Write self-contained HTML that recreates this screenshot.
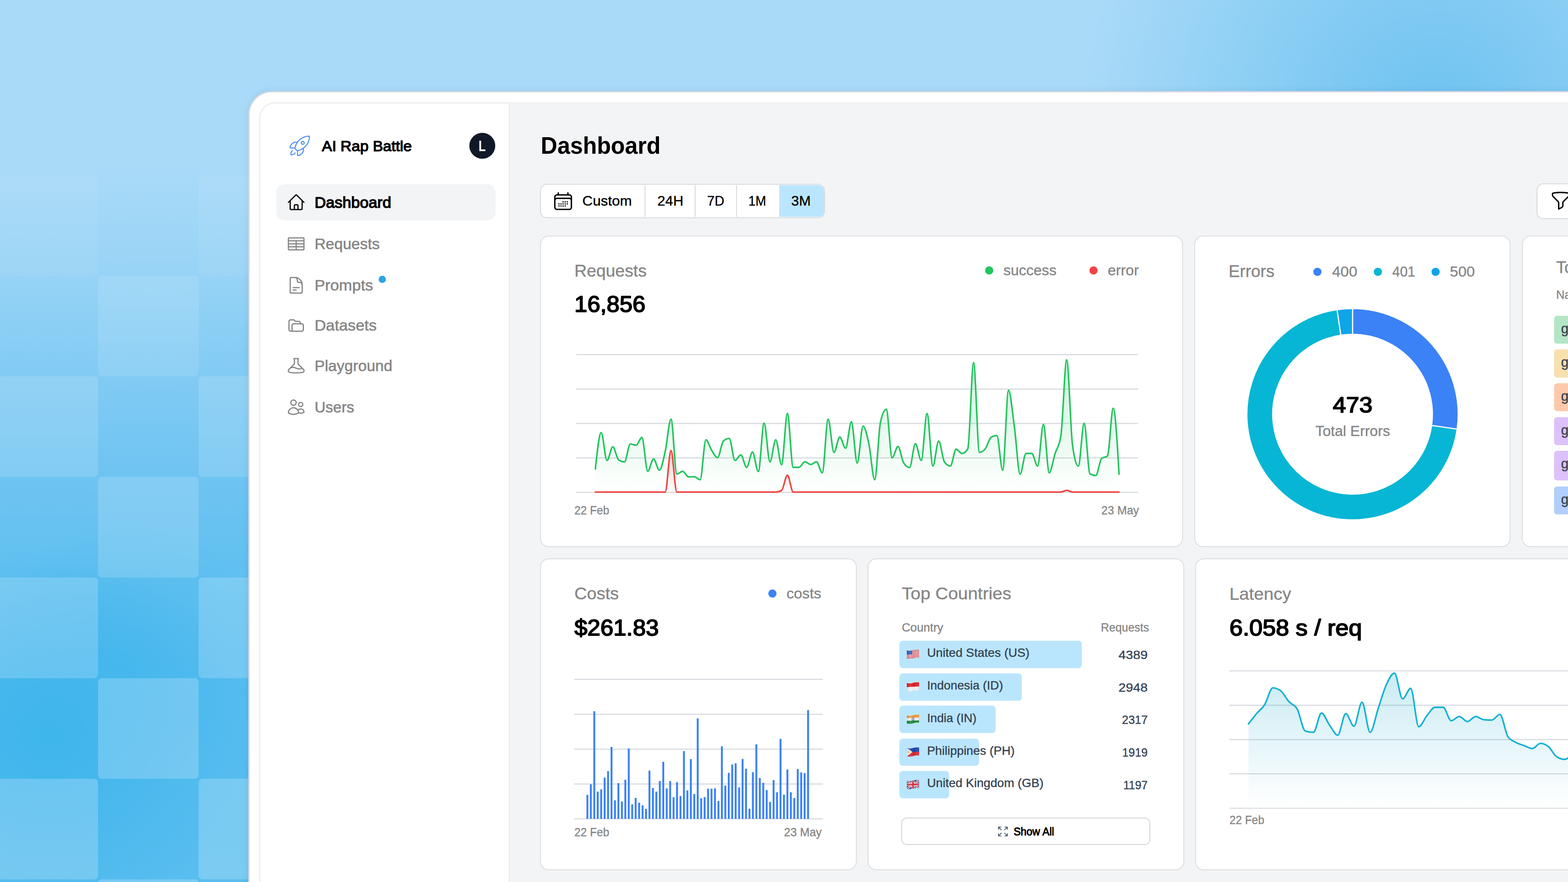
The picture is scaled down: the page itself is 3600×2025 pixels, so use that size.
<!DOCTYPE html>
<html lang="en"><head><meta charset="utf-8"><title>Dashboard</title>
<style>
html,body{margin:0;padding:0}
body{width:3600px;height:2025px;overflow:hidden;position:relative;font-family:"Liberation Sans", sans-serif;background:#a9d9f7}
#root{position:absolute;left:0;top:0;width:3600px;height:2025px;overflow:hidden}
#root>div{position:absolute;box-sizing:border-box}
svg{position:absolute;left:0;top:0}
svg text{font-family:"Liberation Sans", sans-serif;white-space:pre}
.ic{fill:none;stroke-linecap:round;stroke-linejoin:round}
</style></head>
<body><div id="root">
<div style="left:0.0px;top:0.0px;width:3600.0px;height:2025.0px;background:radial-gradient(ellipse 450px 430px at 110px 1690px, rgba(58,180,236,.85) 0%, rgba(58,180,236,.45) 50%, rgba(58,180,236,0) 100%),radial-gradient(ellipse 330px 300px at 290px 1500px, rgba(64,180,236,.38) 0%, rgba(64,180,236,0) 100%),linear-gradient(180deg,#a9daf8 0%,#a9daf8 19%,#99d4f6 30%,#84ccf4 41%,#70c4f2 53%,#60c0f0 65%,#55bcef 78%,#58bdef 100%);"></div>
<div style="left:2400.0px;top:0.0px;width:1200.0px;height:230.0px;background:radial-gradient(ellipse 810px 900px at 895px 300px, rgba(108,194,240,1) 0%, rgba(108,194,240,.5) 50%, rgba(108,194,240,0) 100%);"></div>
<div style="left:-6.3px;top:401.5px;width:231.0px;height:231.0px;background:rgba(255,255,255,0.06);border-radius:9px;"></div>
<div style="left:455.7px;top:401.5px;width:231.0px;height:231.0px;background:rgba(255,255,255,0.06);border-radius:9px;"></div>
<div style="left:224.7px;top:632.5px;width:231.0px;height:231.0px;background:rgba(255,255,255,0.11);border-radius:9px;"></div>
<div style="left:-6.3px;top:863.5px;width:231.0px;height:231.0px;background:rgba(255,255,255,0.14);border-radius:9px;"></div>
<div style="left:455.7px;top:863.5px;width:231.0px;height:231.0px;background:rgba(255,255,255,0.14);border-radius:9px;"></div>
<div style="left:224.7px;top:1094.5px;width:231.0px;height:231.0px;background:rgba(255,255,255,0.16);border-radius:9px;"></div>
<div style="left:-6.3px;top:1325.5px;width:231.0px;height:231.0px;background:rgba(255,255,255,0.19);border-radius:9px;"></div>
<div style="left:455.7px;top:1325.5px;width:231.0px;height:231.0px;background:rgba(255,255,255,0.19);border-radius:9px;"></div>
<div style="left:224.7px;top:1556.5px;width:231.0px;height:231.0px;background:rgba(255,255,255,0.21);border-radius:9px;"></div>
<div style="left:-6.3px;top:1787.5px;width:231.0px;height:231.0px;background:rgba(255,255,255,0.21);border-radius:9px;"></div>
<div style="left:455.7px;top:1787.5px;width:231.0px;height:231.0px;background:rgba(255,255,255,0.21);border-radius:9px;"></div>
<div style="left:224.7px;top:2018.5px;width:231.0px;height:231.0px;background:rgba(255,255,255,0.21);border-radius:9px;"></div>
<div style="left:570.0px;top:209.0px;width:3200.0px;height:2000.0px;background:#fff;border:3px solid #d3d7e1;border-radius:54px;box-shadow:0 0 16px rgba(30,70,130,.10);"></div>
<div style="left:595.0px;top:235.0px;width:3200.0px;height:2000.0px;background:#f3f4f6;border:2.7px solid #eeeeef;border-radius:36px;overflow:hidden;"></div>
<div style="left:597.5px;top:237.5px;width:572.0px;height:2000.0px;background:#fff;border-right:2.5px solid #e6e7ec;border-top-left-radius:33px;"></div>
<div style="left:634.0px;top:423.3px;width:503.5px;height:82.3px;background:#f3f4f6;border-radius:19px;"></div>
<div style="left:1240.0px;top:422.3px;width:654.0px;height:78.7px;background:#fff;border:2.5px solid #d8d9db;border-radius:16px;overflow:hidden;"></div>
<div style="left:1788.5px;top:424.8px;width:103.0px;height:73.7px;background:#bae6fd;border-radius:0 13px 13px 0;"></div>
<div style="left:1480.0px;top:424.8px;width:2.0px;height:73.7px;background:#d8d9db;"></div>
<div style="left:1595.0px;top:424.8px;width:2.0px;height:73.7px;background:#d8d9db;"></div>
<div style="left:1690.0px;top:424.8px;width:2.0px;height:73.7px;background:#d8d9db;"></div>
<div style="left:3528.4px;top:421.0px;width:140.0px;height:81.5px;background:#fff;border:2.5px solid #d8d9db;border-radius:15px;"></div>
<div style="left:1240.0px;top:540.5px;width:1476.0px;height:715.5px;background:#fff;border:2.5px solid #dcdde0;border-radius:20px;"></div>
<div style="left:2742.0px;top:540.5px;width:726.0px;height:715.5px;background:#fff;border:2.5px solid #dcdde0;border-radius:20px;"></div>
<div style="left:3494.0px;top:540.5px;width:726.0px;height:715.5px;background:#fff;border:2.5px solid #dcdde0;border-radius:20px;"></div>
<div style="left:1240.0px;top:1282.3px;width:726.5px;height:715.5px;background:#fff;border:2.5px solid #dcdde0;border-radius:20px;"></div>
<div style="left:1992.0px;top:1282.3px;width:726.5px;height:715.5px;background:#fff;border:2.5px solid #dcdde0;border-radius:20px;"></div>
<div style="left:2744.0px;top:1282.3px;width:1476.0px;height:715.5px;background:#fff;border:2.5px solid #dcdde0;border-radius:20px;"></div>
<div style="left:3568.0px;top:724.5px;width:300.0px;height:64.5px;background:#b4e6c6;border-radius:7px;"></div>
<div style="left:3568.0px;top:802.0px;width:300.0px;height:64.5px;background:#f8e0ae;border-radius:7px;"></div>
<div style="left:3568.0px;top:879.5px;width:300.0px;height:64.5px;background:#fdc9aa;border-radius:7px;"></div>
<div style="left:3568.0px;top:957.5px;width:300.0px;height:64.5px;background:#dcc1fb;border-radius:7px;"></div>
<div style="left:3568.0px;top:1035.0px;width:300.0px;height:68.0px;background:#dcc1fb;border-radius:7px;"></div>
<div style="left:3568.0px;top:1116.5px;width:300.0px;height:64.5px;background:#b1cefd;border-radius:7px;"></div>
<div style="left:2065.2px;top:1471.2px;width:418.7px;height:62.6px;background:#bae6fd;border-radius:8px;"></div>
<div style="left:2065.2px;top:1546.0px;width:281.2px;height:62.6px;background:#bae6fd;border-radius:8px;"></div>
<div style="left:2065.2px;top:1620.4px;width:221.0px;height:62.6px;background:#bae6fd;border-radius:8px;"></div>
<div style="left:2065.2px;top:1695.6px;width:183.1px;height:62.6px;background:#bae6fd;border-radius:8px;"></div>
<div style="left:2065.2px;top:1770.3px;width:114.2px;height:62.6px;background:#bae6fd;border-radius:8px;"></div>
<div style="left:2069.0px;top:1876.7px;width:572.3px;height:63.7px;background:#fff;border:2.5px solid #d4d5d9;border-radius:13px;"></div>
<svg width="3600" height="2025" viewBox="0 0 3600 2025">
<defs>
<linearGradient id="gG" x1="0" y1="0" x2="0" y2="1"><stop offset="0" stop-color="#22c55e" stop-opacity=".22"/><stop offset="1" stop-color="#22c55e" stop-opacity="0"/></linearGradient>
<linearGradient id="gR" x1="0" y1="0" x2="0" y2="1"><stop offset="0" stop-color="#ef4444" stop-opacity=".22"/><stop offset="1" stop-color="#ef4444" stop-opacity="0"/></linearGradient>
<linearGradient id="gC" x1="0" y1="0" x2="0" y2="1"><stop offset="0" stop-color="#0ea5c9" stop-opacity=".22"/><stop offset="1" stop-color="#0ea5c9" stop-opacity="0"/></linearGradient>
</defs>
<g class="ic" transform="translate(661.0,307.6) scale(2.2708)" stroke="#4a8af4" stroke-width="1.0"><path d="M15.59 14.37a6 6 0 0 1-5.84 7.38v-4.8m5.84-2.58a14.98 14.98 0 0 0 6.16-12.12A14.98 14.98 0 0 0 9.631 8.41m5.96 5.96a14.926 14.926 0 0 1-5.841 2.58m-.119-8.54a6 6 0 0 0-7.381 5.84h4.8m2.581-5.84a14.927 14.927 0 0 0-2.58 5.84m2.699 2.7c-.103.021-.207.041-.311.06a15.09 15.09 0 0 1-2.448-2.448 14.9 14.9 0 0 1 .06-.312m-2.24 2.39a4.493 4.493 0 0 0-1.757 4.306 4.493 4.493 0 0 0 4.306-1.758M16.5 9a1.5 1.5 0 1 1-3 0 1.5 1.5 0 0 1 3 0Z"/></g>
<text x="739.0" y="346.6" font-size="33.99" font-weight="400" fill="#000" stroke="#000" stroke-width="1.5" stroke-linejoin="round" text-anchor="start" textLength="206.6" lengthAdjust="spacingAndGlyphs">AI Rap Battle</text>
<circle cx="1107.3" cy="334.7" r="29.8" fill="#111827"/>
<text x="1107.0" y="347.0" font-size="34.51" font-weight="700" fill="#fff" text-anchor="middle" textLength="16.4" lengthAdjust="spacingAndGlyphs">L</text>
<g class="ic" transform="translate(658.0,442.6) scale(1.8333)" stroke="#000" stroke-width="1.5"><path d="m2.25 12 8.954-8.955c.44-.439 1.152-.439 1.591 0L21.75 12M4.5 9.75v10.125c0 .621.504 1.125 1.125 1.125H9.75v-4.875c0-.621.504-1.125 1.125-1.125h2.25c.621 0 1.125.504 1.125 1.125V21h4.125c.621 0 1.125-.504 1.125-1.125V9.75M8.25 21h8.25"/></g>
<text x="722.2" y="476.6" font-size="34.20" font-weight="401" fill="#000" stroke="#000" stroke-width="1.5" stroke-linejoin="round" text-anchor="start" textLength="176.2" lengthAdjust="spacingAndGlyphs">Dashboard</text>
<g class="ic" transform="translate(658.0,537.8) scale(1.8333)" stroke="#868686" stroke-width="1.5"><path d="M3.375 4.5h17.25c.621 0 1.125.504 1.125 1.125v12.75c0 .621-.504 1.125-1.125 1.125H3.375a1.125 1.125 0 0 1-1.125-1.125V5.625c0-.621.504-1.125 1.125-1.125Z"/><path d="M2.25 8.25h19.5M2.25 12h19.5M2.25 15.75h19.5M12 8.25v11.25"/></g>
<text x="722.2" y="571.8" font-size="34.20" font-weight="400" fill="#868686" stroke="#868686" stroke-width="0.7" stroke-linejoin="round" text-anchor="start" textLength="149.6" lengthAdjust="spacingAndGlyphs">Requests</text>
<g class="ic" transform="translate(658.0,633.0) scale(1.8333)" stroke="#868686" stroke-width="1.5"><path d="M19.5 14.25v-2.625a3.375 3.375 0 0 0-3.375-3.375h-1.5A1.125 1.125 0 0 1 13.5 7.125v-1.5a3.375 3.375 0 0 0-3.375-3.375H8.25m0 12.75h7.5m-7.5 3H12M10.5 2.25H5.625c-.621 0-1.125.504-1.125 1.125v17.25c0 .621.504 1.125 1.125 1.125h12.75c.621 0 1.125-.504 1.125-1.125V11.25a9 9 0 0 0-9-9Z"/></g>
<text x="722.2" y="667.0" font-size="34.20" font-weight="400" fill="#868686" stroke="#868686" stroke-width="0.7" stroke-linejoin="round" text-anchor="start" textLength="134.4" lengthAdjust="spacingAndGlyphs">Prompts</text>
<g class="ic" transform="translate(658.0,725.3) scale(1.8333)" stroke="#868686" stroke-width="1.5"><path d="M6.85 19.15H4.9A1.9 1.9 0 0 1 3 17.25V6.9A1.9 1.9 0 0 1 4.9 5h3.5c.5 0 .98.2 1.34.56l.8.8c.36.35.84.55 1.34.55h3.5a1.9 1.9 0 0 1 1.9 1.9v1.1"/><path d="M8.75 9.9h10.35a1.9 1.9 0 0 1 1.9 1.9v5.45a1.9 1.9 0 0 1-1.9 1.9H6.85V11.8a1.9 1.9 0 0 1 1.9-1.9Z"/></g>
<text x="722.2" y="759.3" font-size="34.20" font-weight="400" fill="#868686" stroke="#868686" stroke-width="0.7" stroke-linejoin="round" text-anchor="start" textLength="142.7" lengthAdjust="spacingAndGlyphs">Datasets</text>
<g class="ic" transform="translate(658.0,817.7) scale(1.8333)" stroke="#868686" stroke-width="1.5"><path d="M9.75 3.104v5.714a2.25 2.25 0 0 1-.659 1.591L5 14.5M9.75 3.104c-.251.023-.501.05-.75.082m.75-.082a24.301 24.301 0 0 1 4.5 0m0 0v5.714c0 .597.237 1.17.659 1.591L19.8 15.3M14.25 3.104c.251.023.501.05.75.082M19.8 15.3l-1.57.393A9.065 9.065 0 0 1 12 15a9.065 9.065 0 0 0-6.23-.693L5 14.5m14.8.8 1.402 1.402c1.232 1.232.65 3.318-1.067 3.611A48.309 48.309 0 0 1 12 21c-2.773 0-5.491-.235-8.135-.687-1.718-.293-2.3-2.379-1.067-3.61L5 14.5"/></g>
<text x="722.2" y="851.7" font-size="34.20" font-weight="400" fill="#868686" stroke="#868686" stroke-width="0.7" stroke-linejoin="round" text-anchor="start" textLength="178.6" lengthAdjust="spacingAndGlyphs">Playground</text>
<g class="ic" transform="translate(658.0,912.8) scale(1.8333)" stroke="#868686" stroke-width="1.5"><path d="M15 19.128a9.38 9.38 0 0 0 2.625.372 9.337 9.337 0 0 0 4.121-.952 4.125 4.125 0 0 0-7.533-2.493M15 19.128v-.003c0-1.113-.285-2.16-.786-3.07M15 19.128v.106A12.318 12.318 0 0 1 8.624 21c-2.331 0-4.512-.645-6.374-1.766l-.001-.109a6.375 6.375 0 0 1 11.964-3.07M12 6.375a3.375 3.375 0 1 1-6.75 0 3.375 3.375 0 0 1 6.75 0Zm8.25 2.25a2.625 2.625 0 1 1-5.25 0 2.625 2.625 0 0 1 5.25 0Z"/></g>
<text x="722.2" y="946.8" font-size="34.20" font-weight="400" fill="#868686" stroke="#868686" stroke-width="0.7" stroke-linejoin="round" text-anchor="start" textLength="91.0" lengthAdjust="spacingAndGlyphs">Users</text>
<circle cx="877.7" cy="641.4" r="8.3" fill="#2ea3e6"/>
<text x="1241.6" y="352.6" font-size="54.59" font-weight="700" fill="#000" text-anchor="start" textLength="275.1" lengthAdjust="spacingAndGlyphs">Dashboard</text>
<g class="ic" transform="translate(1267.5,436.4) scale(2.1125)" stroke="#000" stroke-width="1.5"><path d="M6.75 3v2.25M17.25 3v2.25M3 18.75V7.5a2.25 2.25 0 0 1 2.25-2.25h13.5A2.25 2.25 0 0 1 21 7.5v11.25m-18 0A2.25 2.25 0 0 0 5.25 21h13.5A2.25 2.25 0 0 0 21 18.75m-18 0v-7.5A2.25 2.25 0 0 1 5.25 9h13.5A2.25 2.25 0 0 1 21 11.25v7.5"/><path d="M12 12.75h.008v.008H12v-.008ZM12 15h.008v.008H12V15Zm0 2.25h.008v.008H12v-.008ZM9.75 15h.008v.008H9.75V15Zm0 2.25h.008v.008H9.75v-.008ZM7.5 15h.008v.008H7.5V15Zm0 2.25h.008v.008H7.5v-.008Zm6.75-4.5h.008v.008h-.008v-.008Zm0 2.25h.008v.008h-.008V15Zm0 2.25h.008v.008h-.008v-.008Zm2.25-4.5h.008v.008H16.5v-.008Zm0 2.25h.008v.008H16.5V15Z"/></g>
<text x="1337.1" y="472.3" font-size="31.93" font-weight="400" fill="#000" stroke="#000" stroke-width="0.45" stroke-linejoin="round" text-anchor="start" textLength="113.6" lengthAdjust="spacingAndGlyphs">Custom</text>
<text x="1509.2" y="472.3" font-size="31.93" font-weight="400" fill="#000" stroke="#000" stroke-width="0.45" stroke-linejoin="round" text-anchor="start" textLength="59.9" lengthAdjust="spacingAndGlyphs">24H</text>
<text x="1623.6" y="472.3" font-size="31.93" font-weight="400" fill="#000" stroke="#000" stroke-width="0.45" stroke-linejoin="round" text-anchor="start" textLength="39.3" lengthAdjust="spacingAndGlyphs">7D</text>
<text x="1718.2" y="472.3" font-size="31.93" font-weight="400" fill="#000" stroke="#000" stroke-width="0.45" stroke-linejoin="round" text-anchor="start" textLength="40.8" lengthAdjust="spacingAndGlyphs">1M</text>
<text x="1816.6" y="472.3" font-size="31.93" font-weight="400" fill="#000" stroke="#000" stroke-width="0.45" stroke-linejoin="round" text-anchor="start" textLength="44.8" lengthAdjust="spacingAndGlyphs">3M</text>
<g class="ic" transform="translate(3558.0,435.5) scale(2.1125)" stroke="#000" stroke-width="1.5"><path d="M12 3c2.755 0 5.455.232 8.083.678.533.09.917.556.917 1.096v1.044a2.25 2.25 0 0 1-.659 1.591l-5.432 5.432a2.25 2.25 0 0 0-.659 1.591v2.927a2.25 2.25 0 0 1-1.244 2.013L9.75 21v-6.568a2.25 2.25 0 0 0-.659-1.591L3.659 7.409A2.25 2.25 0 0 1 3 5.818V4.774c0-.54.384-1.006.917-1.096A48.32 48.32 0 0 1 12 3Z"/></g>
<text x="1318.8" y="634.9" font-size="38.11" font-weight="400" fill="#868686" stroke="#868686" stroke-width="0.45" stroke-linejoin="round" text-anchor="start" textLength="165.8" lengthAdjust="spacingAndGlyphs">Requests</text>
<text x="1318.8" y="716.3" font-size="51.50" font-weight="400" fill="#000" stroke="#000" stroke-width="2.1" stroke-linejoin="round" text-anchor="start" textLength="163.0" lengthAdjust="spacingAndGlyphs">16,856</text>
<circle cx="2271.1" cy="620.9" r="9.4" fill="#22c55e"/>
<text x="2303.7" y="632.3" font-size="32.96" font-weight="400" fill="#868686" stroke="#868686" stroke-width="0.45" stroke-linejoin="round" text-anchor="start" textLength="121.9" lengthAdjust="spacingAndGlyphs">success</text>
<circle cx="2510.6" cy="620.9" r="9.4" fill="#ef4444"/>
<text x="2543.2" y="632.3" font-size="32.96" font-weight="400" fill="#868686" stroke="#868686" stroke-width="0.45" stroke-linejoin="round" text-anchor="start" textLength="71.5" lengthAdjust="spacingAndGlyphs">error</text>
<line x1="1323.0" y1="814.2" x2="2613.0" y2="814.2" stroke="#d6d9df" stroke-width="2.4"/>
<line x1="1323.0" y1="893.2" x2="2613.0" y2="893.2" stroke="#d6d9df" stroke-width="2.4"/>
<line x1="1323.0" y1="972.2" x2="2613.0" y2="972.2" stroke="#d6d9df" stroke-width="2.4"/>
<line x1="1323.0" y1="1051.2" x2="2613.0" y2="1051.2" stroke="#d6d9df" stroke-width="2.4"/>
<line x1="1323.0" y1="1130.2" x2="2613.0" y2="1130.2" stroke="#d6d9df" stroke-width="2.4"/>
<path d="M1366.9,1076.6C1371.4,1034.9 1375.8,993.2 1380.3,993.2C1384.7,993.2 1389.2,1057.2 1393.6,1057.2C1398.1,1057.2 1402.5,1025.8 1407.0,1025.8C1411.4,1025.8 1415.9,1053.1 1420.3,1056.0C1424.8,1058.9 1429.2,1060.4 1433.7,1060.4C1438.2,1060.4 1442.6,1019.3 1447.1,1019.3C1451.5,1019.3 1456.0,1022.2 1460.4,1022.2C1464.9,1022.2 1469.3,1004.1 1473.8,1004.1C1478.2,1004.1 1482.7,1082.1 1487.1,1082.1C1491.6,1082.1 1496.0,1053.6 1500.5,1053.6C1505.0,1053.6 1509.4,1079.7 1513.9,1079.7C1518.3,1079.7 1522.8,1056.3 1527.2,1036.7C1531.7,1017.1 1536.1,962.3 1540.6,962.3C1545.0,962.3 1549.5,1088.6 1553.9,1088.6C1558.4,1088.6 1562.8,1082.1 1567.3,1082.1C1571.8,1082.1 1576.2,1094.7 1580.7,1094.7C1585.1,1094.7 1589.6,1094.7 1594.0,1094.7C1598.5,1094.7 1602.9,1101.4 1607.4,1101.4C1611.8,1101.4 1616.3,1009.7 1620.7,1009.7C1625.2,1009.7 1629.6,1027.5 1634.1,1034.3C1638.6,1041.1 1643.0,1050.7 1647.5,1050.7C1651.9,1050.7 1656.4,1016.6 1660.8,1012.6C1665.3,1008.5 1669.7,1006.5 1674.2,1006.5C1678.6,1006.5 1683.1,1057.2 1687.5,1057.2C1692.0,1057.2 1696.4,1044.4 1700.9,1044.4C1705.4,1044.4 1709.8,1072.9 1714.3,1072.9C1718.7,1072.9 1723.2,1037.9 1727.6,1037.9C1732.1,1037.9 1736.5,1082.6 1741.0,1082.6C1745.4,1082.6 1749.9,971.5 1754.3,971.5C1758.8,971.5 1763.2,1060.4 1767.7,1060.4C1772.2,1060.4 1776.6,1009.7 1781.1,1009.7C1785.5,1009.7 1790.0,1066.9 1794.4,1066.9C1798.9,1066.9 1803.3,949.3 1807.8,949.3C1812.2,949.3 1816.7,1072.9 1821.1,1072.9C1825.6,1072.9 1830.0,1072.9 1834.5,1072.9C1839.0,1072.9 1843.4,1060.1 1847.9,1060.1C1852.3,1060.1 1856.8,1066.4 1861.2,1066.4C1865.7,1066.4 1870.1,1060.4 1874.6,1060.4C1879.0,1060.4 1883.5,1085.5 1887.9,1085.5C1892.4,1085.5 1896.8,962.3 1901.3,962.3C1905.8,962.3 1910.2,1038.6 1914.7,1038.6C1919.1,1038.6 1923.6,1003.4 1928.0,1003.4C1932.5,1003.4 1936.9,1029.0 1941.4,1029.0C1945.8,1029.0 1950.3,968.4 1954.7,968.4C1959.2,968.4 1963.6,1063.3 1968.1,1063.3C1972.6,1063.3 1977.0,978.3 1981.5,978.3C1985.9,978.3 1990.4,998.1 1994.8,1018.6C1999.3,1039.1 2003.7,1101.4 2008.2,1101.4C2012.6,1101.4 2017.1,988.7 2021.5,969.1C2026.0,949.4 2030.4,939.6 2034.9,939.6C2039.4,939.6 2043.8,1051.2 2048.3,1051.2C2052.7,1051.2 2057.2,1025.1 2061.6,1025.1C2066.1,1025.1 2070.5,1056.5 2075.0,1063.3C2079.4,1070.0 2083.9,1073.4 2088.3,1073.4C2092.8,1073.4 2097.2,1018.6 2101.7,1018.6C2106.2,1018.6 2110.6,1057.2 2115.1,1057.2C2119.5,1057.2 2124.0,949.3 2128.4,949.3C2132.9,949.3 2137.3,1070.0 2141.8,1070.0C2146.2,1070.0 2150.7,1012.6 2155.1,1012.6C2159.6,1012.6 2164.0,1054.8 2168.5,1060.9C2173.0,1067.0 2177.4,1070.0 2181.9,1070.0C2186.3,1070.0 2190.8,1031.4 2195.2,1031.4C2199.7,1031.4 2204.1,1041.1 2208.6,1041.1C2213.0,1041.1 2217.5,1037.6 2221.9,1030.7C2226.4,1023.8 2230.8,832.6 2235.3,832.6C2239.8,832.6 2244.2,1038.6 2248.7,1038.6C2253.1,1038.6 2257.6,1036.0 2262.0,1030.7C2266.5,1025.4 2270.9,1006.8 2275.4,1004.1C2279.8,1001.4 2284.3,1000.0 2288.7,1000.0C2293.2,1000.0 2297.6,1079.7 2302.1,1079.7C2306.6,1079.7 2311.0,896.1 2315.5,896.1C2319.9,896.1 2324.4,946.7 2328.8,978.7C2333.3,1010.8 2337.7,1088.6 2342.2,1088.6C2346.6,1088.6 2351.1,1041.1 2355.5,1041.1C2360.0,1041.1 2364.4,1041.1 2368.9,1041.1C2373.4,1041.1 2377.8,1070.0 2382.3,1070.0C2386.7,1070.0 2391.2,974.4 2395.6,974.4C2400.1,974.4 2404.5,1085.5 2409.0,1085.5C2413.4,1085.5 2417.9,1055.7 2422.3,1041.5C2426.8,1027.4 2431.2,1027.9 2435.7,1000.5C2440.2,973.1 2444.6,826.1 2449.1,826.1C2453.5,826.1 2458.0,990.3 2462.4,1022.2C2466.9,1054.1 2471.3,1070.0 2475.8,1070.0C2480.2,1070.0 2484.7,972.0 2489.1,972.0C2493.6,972.0 2498.0,1085.3 2502.5,1087.9C2507.0,1090.5 2511.4,1091.8 2515.9,1091.8C2520.3,1091.8 2524.8,1056.1 2529.2,1052.4C2533.7,1048.7 2538.1,1050.6 2542.6,1046.9C2547.0,1043.2 2551.5,937.2 2555.9,937.2C2560.4,937.2 2564.8,1012.9 2569.3,1088.6L2569.3,1130.2L1366.9,1130.2Z" fill="url(#gG)"/>
<path d="M1366.9,1129.7C1371.4,1129.7 1375.8,1129.7 1380.3,1129.7C1384.7,1129.7 1389.2,1129.7 1393.6,1129.7C1398.1,1129.7 1402.5,1129.7 1407.0,1129.7C1411.4,1129.7 1415.9,1129.7 1420.3,1129.7C1424.8,1129.7 1429.2,1129.7 1433.7,1129.7C1438.2,1129.7 1442.6,1129.7 1447.1,1129.7C1451.5,1129.7 1456.0,1129.7 1460.4,1129.7C1464.9,1129.7 1469.3,1129.7 1473.8,1129.7C1478.2,1129.7 1482.7,1129.7 1487.1,1129.7C1491.6,1129.7 1496.0,1129.7 1500.5,1129.7C1505.0,1129.7 1509.4,1129.7 1513.9,1129.7C1518.3,1129.7 1522.8,1129.7 1527.2,1129.7C1531.7,1129.7 1536.1,1034.3 1540.6,1034.3C1545.0,1034.3 1549.5,1129.7 1553.9,1129.7C1558.4,1129.7 1562.8,1129.7 1567.3,1129.7C1571.8,1129.7 1576.2,1129.7 1580.7,1129.7C1585.1,1129.7 1589.6,1129.7 1594.0,1129.7C1598.5,1129.7 1602.9,1129.7 1607.4,1129.7C1611.8,1129.7 1616.3,1129.7 1620.7,1129.7C1625.2,1129.7 1629.6,1129.7 1634.1,1129.7C1638.6,1129.7 1643.0,1129.7 1647.5,1129.7C1651.9,1129.7 1656.4,1129.7 1660.8,1129.7C1665.3,1129.7 1669.7,1129.7 1674.2,1129.7C1678.6,1129.7 1683.1,1129.7 1687.5,1129.7C1692.0,1129.7 1696.4,1129.7 1700.9,1129.7C1705.4,1129.7 1709.8,1129.7 1714.3,1129.7C1718.7,1129.7 1723.2,1129.7 1727.6,1129.7C1732.1,1129.7 1736.5,1129.7 1741.0,1129.7C1745.4,1129.7 1749.9,1129.7 1754.3,1129.7C1758.8,1129.7 1763.2,1129.7 1767.7,1129.7C1772.2,1129.7 1776.6,1129.7 1781.1,1129.7C1785.5,1129.7 1790.0,1128.5 1794.4,1126.1C1798.9,1123.7 1803.3,1091.1 1807.8,1091.1C1812.2,1091.1 1816.7,1129.7 1821.1,1129.7C1825.6,1129.7 1830.0,1129.7 1834.5,1129.7C1839.0,1129.7 1843.4,1129.7 1847.9,1129.7C1852.3,1129.7 1856.8,1129.7 1861.2,1129.7C1865.7,1129.7 1870.1,1129.7 1874.6,1129.7C1879.0,1129.7 1883.5,1129.7 1887.9,1129.7C1892.4,1129.7 1896.8,1129.7 1901.3,1129.7C1905.8,1129.7 1910.2,1129.7 1914.7,1129.7C1919.1,1129.7 1923.6,1129.7 1928.0,1129.7C1932.5,1129.7 1936.9,1129.7 1941.4,1129.7C1945.8,1129.7 1950.3,1129.7 1954.7,1129.7C1959.2,1129.7 1963.6,1129.7 1968.1,1129.7C1972.6,1129.7 1977.0,1129.7 1981.5,1129.7C1985.9,1129.7 1990.4,1129.7 1994.8,1129.7C1999.3,1129.7 2003.7,1129.7 2008.2,1129.7C2012.6,1129.7 2017.1,1129.7 2021.5,1129.7C2026.0,1129.7 2030.4,1129.7 2034.9,1129.7C2039.4,1129.7 2043.8,1129.7 2048.3,1129.7C2052.7,1129.7 2057.2,1129.7 2061.6,1129.7C2066.1,1129.7 2070.5,1129.7 2075.0,1129.7C2079.4,1129.7 2083.9,1129.7 2088.3,1129.7C2092.8,1129.7 2097.2,1129.7 2101.7,1129.7C2106.2,1129.7 2110.6,1129.7 2115.1,1129.7C2119.5,1129.7 2124.0,1129.7 2128.4,1129.7C2132.9,1129.7 2137.3,1129.7 2141.8,1129.7C2146.2,1129.7 2150.7,1129.7 2155.1,1129.7C2159.6,1129.7 2164.0,1129.7 2168.5,1129.7C2173.0,1129.7 2177.4,1129.7 2181.9,1129.7C2186.3,1129.7 2190.8,1129.7 2195.2,1129.7C2199.7,1129.7 2204.1,1129.7 2208.6,1129.7C2213.0,1129.7 2217.5,1129.7 2221.9,1129.7C2226.4,1129.7 2230.8,1129.7 2235.3,1129.7C2239.8,1129.7 2244.2,1129.7 2248.7,1129.7C2253.1,1129.7 2257.6,1129.7 2262.0,1129.7C2266.5,1129.7 2270.9,1129.7 2275.4,1129.7C2279.8,1129.7 2284.3,1129.7 2288.7,1129.7C2293.2,1129.7 2297.6,1129.7 2302.1,1129.7C2306.6,1129.7 2311.0,1129.7 2315.5,1129.7C2319.9,1129.7 2324.4,1129.7 2328.8,1129.7C2333.3,1129.7 2337.7,1129.7 2342.2,1129.7C2346.6,1129.7 2351.1,1129.7 2355.5,1129.7C2360.0,1129.7 2364.4,1129.7 2368.9,1129.7C2373.4,1129.7 2377.8,1129.7 2382.3,1129.7C2386.7,1129.7 2391.2,1129.7 2395.6,1129.7C2400.1,1129.7 2404.5,1129.7 2409.0,1129.7C2413.4,1129.7 2417.9,1129.7 2422.3,1129.7C2426.8,1129.7 2431.2,1129.7 2435.7,1129.7C2440.2,1129.7 2444.6,1125.8 2449.1,1125.8C2453.5,1125.8 2458.0,1129.7 2462.4,1129.7C2466.9,1129.7 2471.3,1129.7 2475.8,1129.7C2480.2,1129.7 2484.7,1129.7 2489.1,1129.7C2493.6,1129.7 2498.0,1129.7 2502.5,1129.7C2507.0,1129.7 2511.4,1129.7 2515.9,1129.7C2520.3,1129.7 2524.8,1129.7 2529.2,1129.7C2533.7,1129.7 2538.1,1129.7 2542.6,1129.7C2547.0,1129.7 2551.5,1129.7 2555.9,1129.7C2560.4,1129.7 2564.8,1129.7 2569.3,1129.7L2569.3,1130.2L1366.9,1130.2Z" fill="url(#gR)"/>
<path d="M1366.9,1076.6C1371.4,1034.9 1375.8,993.2 1380.3,993.2C1384.7,993.2 1389.2,1057.2 1393.6,1057.2C1398.1,1057.2 1402.5,1025.8 1407.0,1025.8C1411.4,1025.8 1415.9,1053.1 1420.3,1056.0C1424.8,1058.9 1429.2,1060.4 1433.7,1060.4C1438.2,1060.4 1442.6,1019.3 1447.1,1019.3C1451.5,1019.3 1456.0,1022.2 1460.4,1022.2C1464.9,1022.2 1469.3,1004.1 1473.8,1004.1C1478.2,1004.1 1482.7,1082.1 1487.1,1082.1C1491.6,1082.1 1496.0,1053.6 1500.5,1053.6C1505.0,1053.6 1509.4,1079.7 1513.9,1079.7C1518.3,1079.7 1522.8,1056.3 1527.2,1036.7C1531.7,1017.1 1536.1,962.3 1540.6,962.3C1545.0,962.3 1549.5,1088.6 1553.9,1088.6C1558.4,1088.6 1562.8,1082.1 1567.3,1082.1C1571.8,1082.1 1576.2,1094.7 1580.7,1094.7C1585.1,1094.7 1589.6,1094.7 1594.0,1094.7C1598.5,1094.7 1602.9,1101.4 1607.4,1101.4C1611.8,1101.4 1616.3,1009.7 1620.7,1009.7C1625.2,1009.7 1629.6,1027.5 1634.1,1034.3C1638.6,1041.1 1643.0,1050.7 1647.5,1050.7C1651.9,1050.7 1656.4,1016.6 1660.8,1012.6C1665.3,1008.5 1669.7,1006.5 1674.2,1006.5C1678.6,1006.5 1683.1,1057.2 1687.5,1057.2C1692.0,1057.2 1696.4,1044.4 1700.9,1044.4C1705.4,1044.4 1709.8,1072.9 1714.3,1072.9C1718.7,1072.9 1723.2,1037.9 1727.6,1037.9C1732.1,1037.9 1736.5,1082.6 1741.0,1082.6C1745.4,1082.6 1749.9,971.5 1754.3,971.5C1758.8,971.5 1763.2,1060.4 1767.7,1060.4C1772.2,1060.4 1776.6,1009.7 1781.1,1009.7C1785.5,1009.7 1790.0,1066.9 1794.4,1066.9C1798.9,1066.9 1803.3,949.3 1807.8,949.3C1812.2,949.3 1816.7,1072.9 1821.1,1072.9C1825.6,1072.9 1830.0,1072.9 1834.5,1072.9C1839.0,1072.9 1843.4,1060.1 1847.9,1060.1C1852.3,1060.1 1856.8,1066.4 1861.2,1066.4C1865.7,1066.4 1870.1,1060.4 1874.6,1060.4C1879.0,1060.4 1883.5,1085.5 1887.9,1085.5C1892.4,1085.5 1896.8,962.3 1901.3,962.3C1905.8,962.3 1910.2,1038.6 1914.7,1038.6C1919.1,1038.6 1923.6,1003.4 1928.0,1003.4C1932.5,1003.4 1936.9,1029.0 1941.4,1029.0C1945.8,1029.0 1950.3,968.4 1954.7,968.4C1959.2,968.4 1963.6,1063.3 1968.1,1063.3C1972.6,1063.3 1977.0,978.3 1981.5,978.3C1985.9,978.3 1990.4,998.1 1994.8,1018.6C1999.3,1039.1 2003.7,1101.4 2008.2,1101.4C2012.6,1101.4 2017.1,988.7 2021.5,969.1C2026.0,949.4 2030.4,939.6 2034.9,939.6C2039.4,939.6 2043.8,1051.2 2048.3,1051.2C2052.7,1051.2 2057.2,1025.1 2061.6,1025.1C2066.1,1025.1 2070.5,1056.5 2075.0,1063.3C2079.4,1070.0 2083.9,1073.4 2088.3,1073.4C2092.8,1073.4 2097.2,1018.6 2101.7,1018.6C2106.2,1018.6 2110.6,1057.2 2115.1,1057.2C2119.5,1057.2 2124.0,949.3 2128.4,949.3C2132.9,949.3 2137.3,1070.0 2141.8,1070.0C2146.2,1070.0 2150.7,1012.6 2155.1,1012.6C2159.6,1012.6 2164.0,1054.8 2168.5,1060.9C2173.0,1067.0 2177.4,1070.0 2181.9,1070.0C2186.3,1070.0 2190.8,1031.4 2195.2,1031.4C2199.7,1031.4 2204.1,1041.1 2208.6,1041.1C2213.0,1041.1 2217.5,1037.6 2221.9,1030.7C2226.4,1023.8 2230.8,832.6 2235.3,832.6C2239.8,832.6 2244.2,1038.6 2248.7,1038.6C2253.1,1038.6 2257.6,1036.0 2262.0,1030.7C2266.5,1025.4 2270.9,1006.8 2275.4,1004.1C2279.8,1001.4 2284.3,1000.0 2288.7,1000.0C2293.2,1000.0 2297.6,1079.7 2302.1,1079.7C2306.6,1079.7 2311.0,896.1 2315.5,896.1C2319.9,896.1 2324.4,946.7 2328.8,978.7C2333.3,1010.8 2337.7,1088.6 2342.2,1088.6C2346.6,1088.6 2351.1,1041.1 2355.5,1041.1C2360.0,1041.1 2364.4,1041.1 2368.9,1041.1C2373.4,1041.1 2377.8,1070.0 2382.3,1070.0C2386.7,1070.0 2391.2,974.4 2395.6,974.4C2400.1,974.4 2404.5,1085.5 2409.0,1085.5C2413.4,1085.5 2417.9,1055.7 2422.3,1041.5C2426.8,1027.4 2431.2,1027.9 2435.7,1000.5C2440.2,973.1 2444.6,826.1 2449.1,826.1C2453.5,826.1 2458.0,990.3 2462.4,1022.2C2466.9,1054.1 2471.3,1070.0 2475.8,1070.0C2480.2,1070.0 2484.7,972.0 2489.1,972.0C2493.6,972.0 2498.0,1085.3 2502.5,1087.9C2507.0,1090.5 2511.4,1091.8 2515.9,1091.8C2520.3,1091.8 2524.8,1056.1 2529.2,1052.4C2533.7,1048.7 2538.1,1050.6 2542.6,1046.9C2547.0,1043.2 2551.5,937.2 2555.9,937.2C2560.4,937.2 2564.8,1012.9 2569.3,1088.6" fill="none" stroke="#22c55e" stroke-width="3.6" stroke-linejoin="round" stroke-linecap="round"/>
<path d="M1366.9,1129.7C1371.4,1129.7 1375.8,1129.7 1380.3,1129.7C1384.7,1129.7 1389.2,1129.7 1393.6,1129.7C1398.1,1129.7 1402.5,1129.7 1407.0,1129.7C1411.4,1129.7 1415.9,1129.7 1420.3,1129.7C1424.8,1129.7 1429.2,1129.7 1433.7,1129.7C1438.2,1129.7 1442.6,1129.7 1447.1,1129.7C1451.5,1129.7 1456.0,1129.7 1460.4,1129.7C1464.9,1129.7 1469.3,1129.7 1473.8,1129.7C1478.2,1129.7 1482.7,1129.7 1487.1,1129.7C1491.6,1129.7 1496.0,1129.7 1500.5,1129.7C1505.0,1129.7 1509.4,1129.7 1513.9,1129.7C1518.3,1129.7 1522.8,1129.7 1527.2,1129.7C1531.7,1129.7 1536.1,1034.3 1540.6,1034.3C1545.0,1034.3 1549.5,1129.7 1553.9,1129.7C1558.4,1129.7 1562.8,1129.7 1567.3,1129.7C1571.8,1129.7 1576.2,1129.7 1580.7,1129.7C1585.1,1129.7 1589.6,1129.7 1594.0,1129.7C1598.5,1129.7 1602.9,1129.7 1607.4,1129.7C1611.8,1129.7 1616.3,1129.7 1620.7,1129.7C1625.2,1129.7 1629.6,1129.7 1634.1,1129.7C1638.6,1129.7 1643.0,1129.7 1647.5,1129.7C1651.9,1129.7 1656.4,1129.7 1660.8,1129.7C1665.3,1129.7 1669.7,1129.7 1674.2,1129.7C1678.6,1129.7 1683.1,1129.7 1687.5,1129.7C1692.0,1129.7 1696.4,1129.7 1700.9,1129.7C1705.4,1129.7 1709.8,1129.7 1714.3,1129.7C1718.7,1129.7 1723.2,1129.7 1727.6,1129.7C1732.1,1129.7 1736.5,1129.7 1741.0,1129.7C1745.4,1129.7 1749.9,1129.7 1754.3,1129.7C1758.8,1129.7 1763.2,1129.7 1767.7,1129.7C1772.2,1129.7 1776.6,1129.7 1781.1,1129.7C1785.5,1129.7 1790.0,1128.5 1794.4,1126.1C1798.9,1123.7 1803.3,1091.1 1807.8,1091.1C1812.2,1091.1 1816.7,1129.7 1821.1,1129.7C1825.6,1129.7 1830.0,1129.7 1834.5,1129.7C1839.0,1129.7 1843.4,1129.7 1847.9,1129.7C1852.3,1129.7 1856.8,1129.7 1861.2,1129.7C1865.7,1129.7 1870.1,1129.7 1874.6,1129.7C1879.0,1129.7 1883.5,1129.7 1887.9,1129.7C1892.4,1129.7 1896.8,1129.7 1901.3,1129.7C1905.8,1129.7 1910.2,1129.7 1914.7,1129.7C1919.1,1129.7 1923.6,1129.7 1928.0,1129.7C1932.5,1129.7 1936.9,1129.7 1941.4,1129.7C1945.8,1129.7 1950.3,1129.7 1954.7,1129.7C1959.2,1129.7 1963.6,1129.7 1968.1,1129.7C1972.6,1129.7 1977.0,1129.7 1981.5,1129.7C1985.9,1129.7 1990.4,1129.7 1994.8,1129.7C1999.3,1129.7 2003.7,1129.7 2008.2,1129.7C2012.6,1129.7 2017.1,1129.7 2021.5,1129.7C2026.0,1129.7 2030.4,1129.7 2034.9,1129.7C2039.4,1129.7 2043.8,1129.7 2048.3,1129.7C2052.7,1129.7 2057.2,1129.7 2061.6,1129.7C2066.1,1129.7 2070.5,1129.7 2075.0,1129.7C2079.4,1129.7 2083.9,1129.7 2088.3,1129.7C2092.8,1129.7 2097.2,1129.7 2101.7,1129.7C2106.2,1129.7 2110.6,1129.7 2115.1,1129.7C2119.5,1129.7 2124.0,1129.7 2128.4,1129.7C2132.9,1129.7 2137.3,1129.7 2141.8,1129.7C2146.2,1129.7 2150.7,1129.7 2155.1,1129.7C2159.6,1129.7 2164.0,1129.7 2168.5,1129.7C2173.0,1129.7 2177.4,1129.7 2181.9,1129.7C2186.3,1129.7 2190.8,1129.7 2195.2,1129.7C2199.7,1129.7 2204.1,1129.7 2208.6,1129.7C2213.0,1129.7 2217.5,1129.7 2221.9,1129.7C2226.4,1129.7 2230.8,1129.7 2235.3,1129.7C2239.8,1129.7 2244.2,1129.7 2248.7,1129.7C2253.1,1129.7 2257.6,1129.7 2262.0,1129.7C2266.5,1129.7 2270.9,1129.7 2275.4,1129.7C2279.8,1129.7 2284.3,1129.7 2288.7,1129.7C2293.2,1129.7 2297.6,1129.7 2302.1,1129.7C2306.6,1129.7 2311.0,1129.7 2315.5,1129.7C2319.9,1129.7 2324.4,1129.7 2328.8,1129.7C2333.3,1129.7 2337.7,1129.7 2342.2,1129.7C2346.6,1129.7 2351.1,1129.7 2355.5,1129.7C2360.0,1129.7 2364.4,1129.7 2368.9,1129.7C2373.4,1129.7 2377.8,1129.7 2382.3,1129.7C2386.7,1129.7 2391.2,1129.7 2395.6,1129.7C2400.1,1129.7 2404.5,1129.7 2409.0,1129.7C2413.4,1129.7 2417.9,1129.7 2422.3,1129.7C2426.8,1129.7 2431.2,1129.7 2435.7,1129.7C2440.2,1129.7 2444.6,1125.8 2449.1,1125.8C2453.5,1125.8 2458.0,1129.7 2462.4,1129.7C2466.9,1129.7 2471.3,1129.7 2475.8,1129.7C2480.2,1129.7 2484.7,1129.7 2489.1,1129.7C2493.6,1129.7 2498.0,1129.7 2502.5,1129.7C2507.0,1129.7 2511.4,1129.7 2515.9,1129.7C2520.3,1129.7 2524.8,1129.7 2529.2,1129.7C2533.7,1129.7 2538.1,1129.7 2542.6,1129.7C2547.0,1129.7 2551.5,1129.7 2555.9,1129.7C2560.4,1129.7 2564.8,1129.7 2569.3,1129.7" fill="none" stroke="#ef4444" stroke-width="3.6" stroke-linejoin="round" stroke-linecap="round"/>
<text x="1318.8" y="1181.4" font-size="26.78" font-weight="400" fill="#868686" stroke="#868686" stroke-width="0.45" stroke-linejoin="round" text-anchor="start" textLength="80.0" lengthAdjust="spacingAndGlyphs">22 Feb</text>
<text x="2615.0" y="1181.4" font-size="26.78" font-weight="400" fill="#868686" stroke="#868686" stroke-width="0.45" stroke-linejoin="round" text-anchor="end" textLength="86.5" lengthAdjust="spacingAndGlyphs">23 May</text>
<text x="2820.8" y="635.5" font-size="38.11" font-weight="400" fill="#868686" stroke="#868686" stroke-width="0.45" stroke-linejoin="round" text-anchor="start" textLength="105.2" lengthAdjust="spacingAndGlyphs">Errors</text>
<circle cx="3024.7" cy="624.2" r="9.4" fill="#3b82f6"/>
<text x="3058.2" y="635.1" font-size="32.96" font-weight="400" fill="#868686" stroke="#868686" stroke-width="0.45" stroke-linejoin="round" text-anchor="start" textLength="58.1" lengthAdjust="spacingAndGlyphs">400</text>
<circle cx="3163.5" cy="624.2" r="9.4" fill="#06b6d4"/>
<text x="3196.6" y="635.1" font-size="32.96" font-weight="400" fill="#868686" stroke="#868686" stroke-width="0.45" stroke-linejoin="round" text-anchor="start" textLength="52.9" lengthAdjust="spacingAndGlyphs">401</text>
<circle cx="3296.0" cy="624.2" r="9.4" fill="#0ea5e9"/>
<text x="3328.8" y="635.1" font-size="32.96" font-weight="400" fill="#868686" stroke="#868686" stroke-width="0.45" stroke-linejoin="round" text-anchor="start" textLength="57.4" lengthAdjust="spacingAndGlyphs">500</text>
<path d="M3105.30,708.40A242.6,242.6 0 0 1 3345.48,985.18L3286.87,976.84A183.4,183.4 0 0 0 3105.30,767.60Z" fill="#3b82f6" stroke="#fff" stroke-width="2.6" stroke-linejoin="round"/>
<path d="M3345.48,985.18A242.6,242.6 0 1 1 3069.86,711.00L3078.51,769.57A183.4,183.4 0 1 0 3286.87,976.84Z" fill="#06b6d4" stroke="#fff" stroke-width="2.6" stroke-linejoin="round"/>
<path d="M3069.86,711.00A242.6,242.6 0 0 1 3105.30,708.40L3105.30,767.60A183.4,183.4 0 0 0 3078.51,769.57Z" fill="#0ea5e9" stroke="#fff" stroke-width="2.6" stroke-linejoin="round"/>
<text x="3105.6" y="946.5" font-size="49.44" font-weight="400" fill="#000" stroke="#000" stroke-width="2.0" stroke-linejoin="round" text-anchor="middle" textLength="91.2" lengthAdjust="spacingAndGlyphs">473</text>
<text x="3105.7" y="1000.8" font-size="32.96" font-weight="400" fill="#868686" stroke="#868686" stroke-width="0.45" stroke-linejoin="round" text-anchor="middle" textLength="171.5" lengthAdjust="spacingAndGlyphs">Total Errors</text>
<text x="3572.7" y="626.7" font-size="38.11" font-weight="400" fill="#868686" stroke="#868686" stroke-width="0.45" stroke-linejoin="round" text-anchor="start">Top Models</text>
<text x="3572.7" y="686.0" font-size="26.78" font-weight="400" fill="#868686" stroke="#868686" stroke-width="0.45" stroke-linejoin="round" text-anchor="start">Name</text>
<text x="3584.0" y="764.6" font-size="30.90" font-weight="400" fill="#364152" stroke="#364152" stroke-width="0.45" stroke-linejoin="round" text-anchor="start">gpt-4</text>
<text x="3584.0" y="842.1" font-size="30.90" font-weight="400" fill="#364152" stroke="#364152" stroke-width="0.45" stroke-linejoin="round" text-anchor="start">gpt-4</text>
<text x="3584.0" y="919.6" font-size="30.90" font-weight="400" fill="#364152" stroke="#364152" stroke-width="0.45" stroke-linejoin="round" text-anchor="start">gpt-4</text>
<text x="3584.0" y="997.6" font-size="30.90" font-weight="400" fill="#364152" stroke="#364152" stroke-width="0.45" stroke-linejoin="round" text-anchor="start">gpt-4</text>
<text x="3584.0" y="1075.1" font-size="30.90" font-weight="400" fill="#364152" stroke="#364152" stroke-width="0.45" stroke-linejoin="round" text-anchor="start">gpt-4</text>
<text x="3584.0" y="1156.6" font-size="30.90" font-weight="400" fill="#364152" stroke="#364152" stroke-width="0.45" stroke-linejoin="round" text-anchor="start">gpt-4</text>
<text x="1318.8" y="1375.8" font-size="38.11" font-weight="400" fill="#868686" stroke="#868686" stroke-width="0.45" stroke-linejoin="round" text-anchor="start" textLength="102.0" lengthAdjust="spacingAndGlyphs">Costs</text>
<text x="1318.8" y="1458.7" font-size="51.50" font-weight="400" fill="#000" stroke="#000" stroke-width="2.1" stroke-linejoin="round" text-anchor="start" textLength="193.7" lengthAdjust="spacingAndGlyphs">$261.83</text>
<circle cx="1773.4" cy="1362.7" r="9.4" fill="#3b82f6"/>
<text x="1805.7" y="1374.0" font-size="32.96" font-weight="400" fill="#868686" stroke="#868686" stroke-width="0.45" stroke-linejoin="round" text-anchor="start" textLength="79.8" lengthAdjust="spacingAndGlyphs">costs</text>
<line x1="1318.0" y1="1559.8" x2="1889.0" y2="1559.8" stroke="#d6d9df" stroke-width="2.4"/>
<line x1="1318.0" y1="1640.0" x2="1889.0" y2="1640.0" stroke="#d6d9df" stroke-width="2.4"/>
<line x1="1318.0" y1="1720.0" x2="1889.0" y2="1720.0" stroke="#d6d9df" stroke-width="2.4"/>
<line x1="1318.0" y1="1800.0" x2="1889.0" y2="1800.0" stroke="#d6d9df" stroke-width="2.4"/>
<line x1="1318.0" y1="1880.0" x2="1889.0" y2="1880.0" stroke="#d6d9df" stroke-width="2.4"/>
<path d="M1346.4,1880.0V1825.1h4.4V1880.0ZM1354.3,1880.0V1800.8h4.4V1880.0ZM1362.2,1880.0V1632.9h4.4V1880.0ZM1370.1,1880.0V1817.5h4.4V1880.0ZM1378.1,1880.0V1812.3h4.4V1880.0ZM1386.0,1880.0V1785.3h4.4V1880.0ZM1393.9,1880.0V1770.5h4.4V1880.0ZM1401.8,1880.0V1714.9h4.4V1880.0ZM1409.7,1880.0V1837.5h4.4V1880.0ZM1417.6,1880.0V1798.1h4.4V1880.0ZM1425.6,1880.0V1840.3h4.4V1880.0ZM1433.5,1880.0V1790.2h4.4V1880.0ZM1441.4,1880.0V1718.5h4.4V1880.0ZM1449.3,1880.0V1846.7h4.4V1880.0ZM1457.2,1880.0V1831.8h4.4V1880.0ZM1465.2,1880.0V1843.0h4.4V1880.0ZM1473.1,1880.0V1849.1h4.4V1880.0ZM1481.0,1880.0V1857.0h4.4V1880.0ZM1488.9,1880.0V1769.2h4.4V1880.0ZM1496.8,1880.0V1809.3h4.4V1880.0ZM1504.7,1880.0V1817.5h4.4V1880.0ZM1512.7,1880.0V1793.2h4.4V1880.0ZM1520.6,1880.0V1748.9h4.4V1880.0ZM1528.5,1880.0V1809.9h4.4V1880.0ZM1536.4,1880.0V1793.2h4.4V1880.0ZM1544.3,1880.0V1830.3h4.4V1880.0ZM1552.2,1880.0V1795.7h4.4V1880.0ZM1560.2,1880.0V1827.8h4.4V1880.0ZM1568.1,1880.0V1724.6h4.4V1880.0ZM1576.0,1880.0V1814.8h4.4V1880.0ZM1583.9,1880.0V1742.8h4.4V1880.0ZM1591.8,1880.0V1823.0h4.4V1880.0ZM1599.7,1880.0V1649.6h4.4V1880.0ZM1607.7,1880.0V1832.7h4.4V1880.0ZM1615.6,1880.0V1830.0h4.4V1880.0ZM1623.5,1880.0V1810.8h4.4V1880.0ZM1631.4,1880.0V1810.8h4.4V1880.0ZM1639.3,1880.0V1809.9h4.4V1880.0ZM1647.3,1880.0V1839.1h4.4V1880.0ZM1655.2,1880.0V1713.4h4.4V1880.0ZM1663.1,1880.0V1803.5h4.4V1880.0ZM1671.0,1880.0V1774.4h4.4V1880.0ZM1678.9,1880.0V1755.3h4.4V1880.0ZM1686.8,1880.0V1752.5h4.4V1880.0ZM1694.8,1880.0V1808.1h4.4V1880.0ZM1702.7,1880.0V1742.5h4.4V1880.0ZM1710.6,1880.0V1765.0h4.4V1880.0ZM1718.5,1880.0V1856.7h4.4V1880.0ZM1726.4,1880.0V1772.9h4.4V1880.0ZM1734.3,1880.0V1709.1h4.4V1880.0ZM1742.3,1880.0V1786.2h4.4V1880.0ZM1750.2,1880.0V1797.2h4.4V1880.0ZM1758.1,1880.0V1813.9h4.4V1880.0ZM1766.0,1880.0V1841.2h4.4V1880.0ZM1773.9,1880.0V1791.1h4.4V1880.0ZM1781.8,1880.0V1819.0h4.4V1880.0ZM1789.8,1880.0V1696.4h4.4V1880.0ZM1797.7,1880.0V1824.5h4.4V1880.0ZM1805.6,1880.0V1766.8h4.4V1880.0ZM1813.5,1880.0V1819.0h4.4V1880.0ZM1821.4,1880.0V1832.1h4.4V1880.0ZM1829.4,1880.0V1765.6h4.4V1880.0ZM1837.3,1880.0V1773.2h4.4V1880.0ZM1845.2,1880.0V1775.0h4.4V1880.0ZM1853.1,1880.0V1630.2h4.4V1880.0Z" fill="#3b82f6"/>
<text x="1318.8" y="1919.5" font-size="26.78" font-weight="400" fill="#868686" stroke="#868686" stroke-width="0.45" stroke-linejoin="round" text-anchor="start" textLength="80.0" lengthAdjust="spacingAndGlyphs">22 Feb</text>
<text x="1886.5" y="1919.5" font-size="26.78" font-weight="400" fill="#868686" stroke="#868686" stroke-width="0.45" stroke-linejoin="round" text-anchor="end" textLength="86.5" lengthAdjust="spacingAndGlyphs">23 May</text>
<text x="2070.5" y="1376.2" font-size="38.11" font-weight="400" fill="#868686" stroke="#868686" stroke-width="0.45" stroke-linejoin="round" text-anchor="start" textLength="251.3" lengthAdjust="spacingAndGlyphs">Top Countries</text>
<text x="2070.5" y="1450.1" font-size="26.78" font-weight="400" fill="#868686" stroke="#868686" stroke-width="0.45" stroke-linejoin="round" text-anchor="start" textLength="95.0" lengthAdjust="spacingAndGlyphs">Country</text>
<text x="2638.2" y="1450.1" font-size="26.78" font-weight="400" fill="#868686" stroke="#868686" stroke-width="0.45" stroke-linejoin="round" text-anchor="end" textLength="110.7" lengthAdjust="spacingAndGlyphs">Requests</text>
<text x="2128.4" y="1508.3" font-size="27.81" font-weight="400" fill="#364152" stroke="#364152" stroke-width="0.45" stroke-linejoin="round" text-anchor="start" textLength="235.3" lengthAdjust="spacingAndGlyphs">United States (US)</text>
<text x="2634.9" y="1512.7" font-size="27.81" font-weight="400" fill="#364152" stroke="#364152" stroke-width="0.45" stroke-linejoin="round" text-anchor="end" textLength="66.8" lengthAdjust="spacingAndGlyphs">4389</text>
<text x="2128.4" y="1583.1" font-size="27.81" font-weight="400" fill="#364152" stroke="#364152" stroke-width="0.45" stroke-linejoin="round" text-anchor="start" textLength="174.5" lengthAdjust="spacingAndGlyphs">Indonesia (ID)</text>
<text x="2634.9" y="1587.5" font-size="27.81" font-weight="400" fill="#364152" stroke="#364152" stroke-width="0.45" stroke-linejoin="round" text-anchor="end" textLength="66.8" lengthAdjust="spacingAndGlyphs">2948</text>
<text x="2128.4" y="1657.5" font-size="27.81" font-weight="400" fill="#364152" stroke="#364152" stroke-width="0.45" stroke-linejoin="round" text-anchor="start" textLength="113.6" lengthAdjust="spacingAndGlyphs">India (IN)</text>
<text x="2634.9" y="1661.9" font-size="27.81" font-weight="400" fill="#364152" stroke="#364152" stroke-width="0.45" stroke-linejoin="round" text-anchor="end" textLength="59.0" lengthAdjust="spacingAndGlyphs">2317</text>
<text x="2128.4" y="1732.7" font-size="27.81" font-weight="400" fill="#364152" stroke="#364152" stroke-width="0.45" stroke-linejoin="round" text-anchor="start" textLength="201.2" lengthAdjust="spacingAndGlyphs">Philippines (PH)</text>
<text x="2634.9" y="1737.1" font-size="27.81" font-weight="400" fill="#364152" stroke="#364152" stroke-width="0.45" stroke-linejoin="round" text-anchor="end" textLength="58.4" lengthAdjust="spacingAndGlyphs">1919</text>
<text x="2128.4" y="1807.4" font-size="27.81" font-weight="400" fill="#364152" stroke="#364152" stroke-width="0.45" stroke-linejoin="round" text-anchor="start" textLength="267.6" lengthAdjust="spacingAndGlyphs">United Kingdom (GB)</text>
<text x="2634.9" y="1811.8" font-size="27.81" font-weight="400" fill="#364152" stroke="#364152" stroke-width="0.45" stroke-linejoin="round" text-anchor="end" textLength="56.0" lengthAdjust="spacingAndGlyphs">1197</text>
<g class="ic" transform="translate(2287.8,1894.2) scale(1.2333)" stroke="#475569" stroke-width="1.5"><path d="M3.75 3.75v4.5m0-4.5h4.5m-4.5 0L9 9M3.75 20.25v-4.5m0 4.5h4.5m-4.5 0L9 15M20.25 3.75h-4.5m4.5 0v4.5m0-4.5L15 9m5.25 11.25h-4.5m4.5 0v-4.5m0 4.5L15 15"/></g>
<text x="2327.2" y="1917.6" font-size="25.75" font-weight="400" fill="#000" stroke="#000" stroke-width="1.1" stroke-linejoin="round" text-anchor="start" textLength="93.0" lengthAdjust="spacingAndGlyphs">Show All</text>
<text x="2822.7" y="1376.8" font-size="38.11" font-weight="400" fill="#868686" stroke="#868686" stroke-width="0.45" stroke-linejoin="round" text-anchor="start" textLength="141.7" lengthAdjust="spacingAndGlyphs">Latency</text>
<text x="2822.7" y="1458.6" font-size="51.50" font-weight="400" fill="#000" stroke="#000" stroke-width="2.1" stroke-linejoin="round" text-anchor="start" textLength="304.3" lengthAdjust="spacingAndGlyphs">6.058 s / req</text>
<line x1="2822.7" y1="1540.4" x2="4117.0" y2="1540.4" stroke="#d6d9df" stroke-width="2.4"/>
<line x1="2822.7" y1="1619.2" x2="4117.0" y2="1619.2" stroke="#d6d9df" stroke-width="2.4"/>
<line x1="2822.7" y1="1698.0" x2="4117.0" y2="1698.0" stroke="#d6d9df" stroke-width="2.4"/>
<line x1="2822.7" y1="1776.8" x2="4117.0" y2="1776.8" stroke="#d6d9df" stroke-width="2.4"/>
<line x1="2822.7" y1="1855.6" x2="4117.0" y2="1855.6" stroke="#d6d9df" stroke-width="2.4"/>
<path d="M2866.4,1662.0C2872.6,1653.9 2878.8,1645.7 2885.0,1638.4C2891.2,1631.0 2897.4,1627.7 2903.6,1617.8C2909.8,1608.0 2916.1,1579.2 2922.3,1579.2C2928.5,1579.2 2934.7,1581.6 2940.9,1586.4C2947.1,1591.3 2953.3,1604.5 2959.5,1611.3C2965.7,1618.1 2971.9,1616.7 2978.1,1627.5C2984.3,1638.3 2990.5,1676.1 2996.7,1678.2C3002.9,1680.3 3009.2,1681.4 3015.4,1681.4C3021.6,1681.4 3027.8,1637.1 3034.0,1637.1C3040.2,1637.1 3046.4,1656.5 3052.6,1664.9C3058.8,1673.4 3065.0,1687.9 3071.2,1687.9C3077.4,1687.9 3083.6,1638.4 3089.8,1638.4C3096.0,1638.4 3102.3,1667.3 3108.5,1667.3C3114.7,1667.3 3120.9,1612.3 3127.1,1612.3C3133.3,1612.3 3139.5,1681.4 3145.7,1681.4C3151.9,1681.4 3158.1,1644.5 3164.3,1626.3C3170.5,1608.0 3176.7,1585.4 3182.9,1571.9C3189.1,1558.4 3195.4,1545.4 3201.6,1545.4C3207.8,1545.4 3214.0,1604.5 3220.2,1604.5C3226.4,1604.5 3232.6,1580.4 3238.8,1580.4C3245.0,1580.4 3251.2,1668.6 3257.4,1668.6C3263.6,1668.6 3269.8,1650.6 3276.0,1643.2C3282.2,1635.7 3288.5,1623.9 3294.7,1623.9C3300.9,1623.9 3307.1,1623.9 3313.3,1623.9C3319.5,1623.9 3325.7,1654.8 3331.9,1654.8C3338.1,1654.8 3344.3,1645.1 3350.5,1645.1C3356.7,1645.1 3362.9,1656.5 3369.1,1656.5C3375.3,1656.5 3381.6,1645.1 3387.8,1645.1C3394.0,1645.1 3400.2,1651.7 3406.4,1652.4C3412.6,1653.0 3418.8,1653.3 3425.0,1653.3C3431.2,1653.3 3437.4,1640.3 3443.6,1640.3C3449.8,1640.3 3456.0,1682.6 3462.2,1691.5C3468.4,1700.4 3474.7,1701.4 3480.9,1704.8C3487.1,1708.2 3493.3,1709.7 3499.5,1712.0C3505.7,1714.3 3511.9,1718.6 3518.1,1718.6C3524.3,1718.6 3530.5,1706.7 3536.7,1706.7C3542.9,1706.7 3549.1,1709.3 3555.3,1714.4C3561.5,1719.6 3567.8,1733.4 3574.0,1737.4C3580.2,1741.4 3586.4,1743.4 3592.6,1743.4C3598.8,1743.4 3605.0,1735.2 3611.2,1732.6C3617.4,1729.9 3623.6,1727.7 3629.8,1727.7C3636.0,1727.7 3642.2,1737.4 3648.4,1737.4C3654.6,1737.4 3660.9,1733.8 3667.1,1730.1L3667.1,1855.6L2866.4,1855.6Z" fill="url(#gC)"/>
<path d="M2866.4,1662.0C2872.6,1653.9 2878.8,1645.7 2885.0,1638.4C2891.2,1631.0 2897.4,1627.7 2903.6,1617.8C2909.8,1608.0 2916.1,1579.2 2922.3,1579.2C2928.5,1579.2 2934.7,1581.6 2940.9,1586.4C2947.1,1591.3 2953.3,1604.5 2959.5,1611.3C2965.7,1618.1 2971.9,1616.7 2978.1,1627.5C2984.3,1638.3 2990.5,1676.1 2996.7,1678.2C3002.9,1680.3 3009.2,1681.4 3015.4,1681.4C3021.6,1681.4 3027.8,1637.1 3034.0,1637.1C3040.2,1637.1 3046.4,1656.5 3052.6,1664.9C3058.8,1673.4 3065.0,1687.9 3071.2,1687.9C3077.4,1687.9 3083.6,1638.4 3089.8,1638.4C3096.0,1638.4 3102.3,1667.3 3108.5,1667.3C3114.7,1667.3 3120.9,1612.3 3127.1,1612.3C3133.3,1612.3 3139.5,1681.4 3145.7,1681.4C3151.9,1681.4 3158.1,1644.5 3164.3,1626.3C3170.5,1608.0 3176.7,1585.4 3182.9,1571.9C3189.1,1558.4 3195.4,1545.4 3201.6,1545.4C3207.8,1545.4 3214.0,1604.5 3220.2,1604.5C3226.4,1604.5 3232.6,1580.4 3238.8,1580.4C3245.0,1580.4 3251.2,1668.6 3257.4,1668.6C3263.6,1668.6 3269.8,1650.6 3276.0,1643.2C3282.2,1635.7 3288.5,1623.9 3294.7,1623.9C3300.9,1623.9 3307.1,1623.9 3313.3,1623.9C3319.5,1623.9 3325.7,1654.8 3331.9,1654.8C3338.1,1654.8 3344.3,1645.1 3350.5,1645.1C3356.7,1645.1 3362.9,1656.5 3369.1,1656.5C3375.3,1656.5 3381.6,1645.1 3387.8,1645.1C3394.0,1645.1 3400.2,1651.7 3406.4,1652.4C3412.6,1653.0 3418.8,1653.3 3425.0,1653.3C3431.2,1653.3 3437.4,1640.3 3443.6,1640.3C3449.8,1640.3 3456.0,1682.6 3462.2,1691.5C3468.4,1700.4 3474.7,1701.4 3480.9,1704.8C3487.1,1708.2 3493.3,1709.7 3499.5,1712.0C3505.7,1714.3 3511.9,1718.6 3518.1,1718.6C3524.3,1718.6 3530.5,1706.7 3536.7,1706.7C3542.9,1706.7 3549.1,1709.3 3555.3,1714.4C3561.5,1719.6 3567.8,1733.4 3574.0,1737.4C3580.2,1741.4 3586.4,1743.4 3592.6,1743.4C3598.8,1743.4 3605.0,1735.2 3611.2,1732.6C3617.4,1729.9 3623.6,1727.7 3629.8,1727.7C3636.0,1727.7 3642.2,1737.4 3648.4,1737.4C3654.6,1737.4 3660.9,1733.8 3667.1,1730.1" fill="none" stroke="#14b1d3" stroke-width="3.6" stroke-linejoin="round" stroke-linecap="round"/>
<text x="2822.7" y="1891.5" font-size="26.78" font-weight="400" fill="#868686" stroke="#868686" stroke-width="0.45" stroke-linejoin="round" text-anchor="start" textLength="80.0" lengthAdjust="spacingAndGlyphs">22 Feb</text>
<defs><clipPath id="fw"><path d="M0,1.9C4,3.3 9,3.1 14,1.7S24,-0.5 28.2,0.6V19C24,17.9 19,18.7 14,20.1S4,21.7 0,20.5Z"/></clipPath><linearGradient id="fsh" x1="0" y1="0" x2="1" y2="0"><stop offset="0" stop-color="#000" stop-opacity=".10"/><stop offset=".3" stop-color="#fff" stop-opacity=".12"/><stop offset=".6" stop-color="#000" stop-opacity=".02"/><stop offset=".85" stop-color="#fff" stop-opacity=".10"/><stop offset="1" stop-color="#000" stop-opacity=".10"/></linearGradient></defs>
<g transform="translate(2082.0,1491.4)" clip-path="url(#fw)"><g transform="translate(0,0.6) skewY(-2.7)"><rect y="-2" width="28.2" height="23" fill="#f4f4f4"/><rect y="1.20" width="28.2" height="1.45" fill="#dc3340"/><rect y="4.10" width="28.2" height="1.45" fill="#dc3340"/><rect y="7.00" width="28.2" height="1.45" fill="#dc3340"/><rect y="9.90" width="28.2" height="1.45" fill="#dc3340"/><rect y="12.80" width="28.2" height="1.45" fill="#dc3340"/><rect y="15.70" width="28.2" height="1.45" fill="#dc3340"/><rect y="18.60" width="28.2" height="1.45" fill="#dc3340"/><rect y="-2" width="12.2" height="13.3" fill="#2f62bd"/></g><rect width="28.2" height="22" fill="url(#fsh)"/></g>
<g transform="translate(2082.0,1566.2)" clip-path="url(#fw)"><g transform="translate(0,0.6) skewY(-2.7)"><rect y="-2" width="28.2" height="23" fill="#f3f3f3"/><rect y="-2" width="28.2" height="12.6" fill="#e2202b"/></g><rect width="28.2" height="22" fill="url(#fsh)"/></g>
<g transform="translate(2082.0,1640.6)" clip-path="url(#fw)"><g transform="translate(0,0.6) skewY(-2.7)"><rect y="-2" width="28.2" height="23" fill="#f4f4f4"/><rect y="-2" width="28.2" height="9.4" fill="#f39a36"/><rect y="13.8" width="28.2" height="9" fill="#1e8a3c"/><circle cx="14.1" cy="10.6" r="2.5" fill="#dfe3f6" stroke="#3346b5" stroke-width="1"/></g><rect width="28.2" height="22" fill="url(#fsh)"/></g>
<g transform="translate(2082.0,1715.8)" clip-path="url(#fw)"><g transform="translate(0,0.6) skewY(-2.7)"><rect y="-2" width="28.2" height="23" fill="#d52a37"/><rect y="-2" width="28.2" height="12.6" fill="#1d47b3"/><path d="M0,0.6L12.6,10.6L0,20.6Z" fill="#f4f4f4"/><circle cx="4.4" cy="10.6" r="2.1" fill="#f2c22e"/></g><rect width="28.2" height="22" fill="url(#fsh)"/></g>
<g transform="translate(2082.0,1790.5)" clip-path="url(#fw)"><g transform="translate(0,0.6) skewY(-2.7)"><rect y="-2" width="28.2" height="23" fill="#213a94"/><path d="M0,1.2L28.2,20M28.2,1.2L0,20" stroke="#f4f4f4" stroke-width="4.4"/><path d="M0,1.2L28.2,20M28.2,1.2L0,20" stroke="#d52a37" stroke-width="1.6"/><path d="M14.1,-2V23M0,10.6H28.2" stroke="#f4f4f4" stroke-width="6.2"/><path d="M14.1,-2V23M0,10.6H28.2" stroke="#d52a37" stroke-width="3.6"/></g><rect width="28.2" height="22" fill="url(#fsh)"/></g>
</svg>
</div></body></html>
